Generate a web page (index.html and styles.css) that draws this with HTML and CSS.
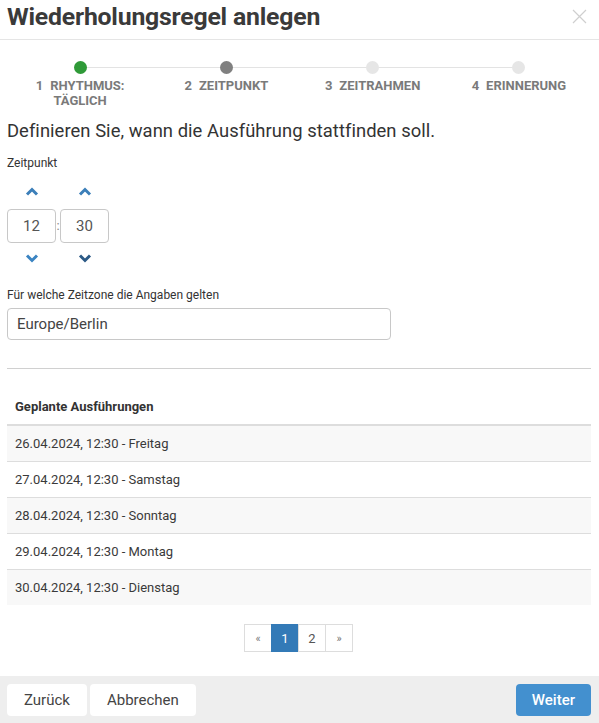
FILE: index.html
```html
<!DOCTYPE html>
<html lang="de">
<head>
<meta charset="utf-8">
<title>Wiederholungsregel anlegen</title>
<link rel="stylesheet" href="styles.css">
</head>
<body>
<div class="dialog">
  <div class="header">
    <h1 class="title">Wiederholungsregel anlegen</h1>
    <svg class="close" width="15" height="15" viewBox="0 0 15 15"><path d="M1 1L14 14M14 1L1 14" stroke="#cfcfcf" stroke-width="1.2" fill="none"/></svg>
  </div>

  <div class="stepper">
    <div class="step"><span class="dot dot-done"></span><span class="step-label"><span class="num">1</span>RHYTHMUS: TÄGLICH</span></div>
    <div class="step"><span class="dot dot-active"></span><span class="step-label"><span class="num">2</span>ZEITPUNKT</span></div>
    <div class="step"><span class="dot"></span><span class="step-label"><span class="num">3</span>ZEITRAHMEN</span></div>
    <div class="step"><span class="dot"></span><span class="step-label"><span class="num">4</span>ERINNERUNG</span></div>
  </div>

  <div class="content">
    <h2 class="lead">Definieren Sie, wann die Ausführung stattfinden soll.</h2>

    <div class="field-label">Zeitpunkt</div>
    <div class="timepicker">
      <div class="tp-col">
        <svg class="chev" width="14" height="9" viewBox="0 0 14 9"><path d="M2 7.5L7 2.5L12 7.5" stroke="#3c7fb9" stroke-width="3" fill="none"/></svg>
        <div class="tp-box">12</div>
        <svg class="chev" width="14" height="9" viewBox="0 0 14 9"><path d="M2 1.5L7 6.5L12 1.5" stroke="#3b84c2" stroke-width="3" fill="none"/></svg>
      </div>
      <div class="tp-sep">:</div>
      <div class="tp-col">
        <svg class="chev" width="14" height="9" viewBox="0 0 14 9"><path d="M2 7.5L7 2.5L12 7.5" stroke="#3c7fb9" stroke-width="3" fill="none"/></svg>
        <div class="tp-box">30</div>
        <svg class="chev" width="14" height="9" viewBox="0 0 14 9"><path d="M2 1.5L7 6.5L12 1.5" stroke="#2c5a86" stroke-width="3" fill="none"/></svg>
      </div>
    </div>

    <div class="field-label tz-label">Für welche Zeitzone die Angaben gelten</div>
    <div class="tz-input">Europe/Berlin</div>

    <hr class="divider">

    <table class="runs">
      <thead><tr><th>Geplante Ausführungen</th></tr></thead>
      <tbody>
        <tr><td>26.04.2024, 12:30 - Freitag</td></tr>
        <tr><td>27.04.2024, 12:30 - Samstag</td></tr>
        <tr><td>28.04.2024, 12:30 - Sonntag</td></tr>
        <tr><td>29.04.2024, 12:30 - Montag</td></tr>
        <tr><td>30.04.2024, 12:30 - Dienstag</td></tr>
      </tbody>
    </table>

    <div class="pager">
      <span class="pg pg-arrow">«</span><span class="pg pg-active">1</span><span class="pg">2</span><span class="pg pg-arrow">»</span>
    </div>
  </div>

  <div class="footer">
    <div class="footer-left">
      <button class="btn">Zurück</button>
      <button class="btn">Abbrechen</button>
    </div>
    <button class="btn btn-primary">Weiter</button>
  </div>
</div>
</body>
</html>
```
FILE: styles.css
```css
* { box-sizing: border-box; }
html, body { margin: 0; padding: 0; background: #fff; }
body {
  font-family: Roboto, "Liberation Sans", sans-serif;
  color: #333;
  width: 599px;
  height: 723px;
  overflow: hidden;
}
.dialog { display: flex; flex-direction: column; height: 723px; }

.header {
  height: 40px;
  border-bottom: 1px solid #e5e5e5;
  display: flex;
  align-items: center;
  justify-content: space-between;
  padding: 0 12px 0 7px;
}
.title {
  margin: 0;
  font-size: 24.8px;
  font-weight: 700;
  letter-spacing: -0.2px;
  color: #3a3a3a;
  line-height: 1;
  padding-bottom: 4px;
}
.close { display: block; margin-top: -7px; }

.stepper {
  position: relative;
  display: grid;
  grid-template-columns: repeat(4, 1fr);
  margin: 0 7px;
  padding-top: 21px;
  height: 80px;
}
.stepper::before {
  content: "";
  position: absolute;
  left: 73px;
  right: 73px;
  top: 27px;
  height: 1px;
  background: #e3e3e3;
}
.step { display: flex; flex-direction: column; align-items: center; position: relative; }
.dot { width: 13px; height: 13px; border-radius: 50%; background: #e6e6e6; }
.dot-done { background: #2f9a38; }
.dot-active { background: #808080; }
.step-label {
  margin-top: 4px;
  max-width: 106px;
  text-align: center;
  font-size: 13px;
  font-weight: 700;
  line-height: 15px;
  color: #7a7a7a;
}
.num { margin-right: 7px; }

.content { padding: 0 8px 0 7px; flex: 1; }
.lead {
  margin: 0;
  font-size: 18.4px;
  font-weight: 400;
  letter-spacing: 0.05px;
  color: #333;
  line-height: 22px;
}
.field-label { font-size: 12px; margin-top: 14px; line-height: 14px; color: #333; }

.timepicker { display: flex; align-items: center; margin-top: 17px; }
.tp-col { display: flex; flex-direction: column; align-items: center; }
.chev { display: block; }
.tp-col .chev:first-child { margin-bottom: 13px; }
.tp-col .chev:last-child { margin-top: 11px; }
.tp-box {
  width: 49px; height: 34px;
  border: 1px solid #c8c8c8;
  border-radius: 4px;
  display: flex; align-items: center; justify-content: center;
  font-size: 15px; color: #555;
}
.tp-sep { width: 4px; text-align: center; font-size: 13px; color: #888; }

.tz-label { margin-top: 25px; }
.tz-input {
  margin-top: 6px;
  width: 384px; height: 32px;
  border: 1px solid #c8c8c8;
  border-radius: 4px;
  padding: 0 9px;
  display: flex; align-items: center;
  font-size: 15px; color: #444;
}

.divider { border: 0; border-top: 1px solid #d0d0d0; margin: 28px 0 0; }

.runs { width: 100%; border-collapse: collapse; margin-top: 21px; font-size: 13px; }
.runs th {
  text-align: left; font-weight: 700; padding: 9px 8px 10px;
  border-bottom: 2px solid #dddddd; line-height: 15px;
}
.runs td { padding: 10px 8px 9px; line-height: 16px; border-top: 1px solid #dddddd; color: #3a3a3a; }
.runs tbody tr:nth-child(odd) { background: #f8f8f8; }
.runs tbody tr:first-child td { border-top: 0; }

.pager { display: flex; justify-content: center; margin-top: 19px; }
.pg {
  width: 28px; height: 28px;
  border: 1px solid #dddddd;
  margin-left: -1px;
  display: flex; align-items: center; justify-content: center;
  font-size: 13px; color: #555;
}
.pg-arrow { font-size: 11px; color: #777; }
.pg-active { background: #337ab7; border-color: #337ab7; color: #fff; }

.footer {
  background: #eeeeee;
  height: 47px;
  padding: 8px 8px 7px 7px;
  display: flex; justify-content: space-between; align-items: center;
}
.footer-left { display: flex; gap: 3px; }
.btn {
  font-family: Roboto, "Liberation Sans", sans-serif;
  height: 32px;
  border: 0;
  border-radius: 4px;
  background: #fff;
  font-size: 15px;
  color: #444;
  padding: 0 17px;
}
.btn-primary { background: #4390cf; color: #fff; padding: 0 16px; font-weight: 500; }
```
